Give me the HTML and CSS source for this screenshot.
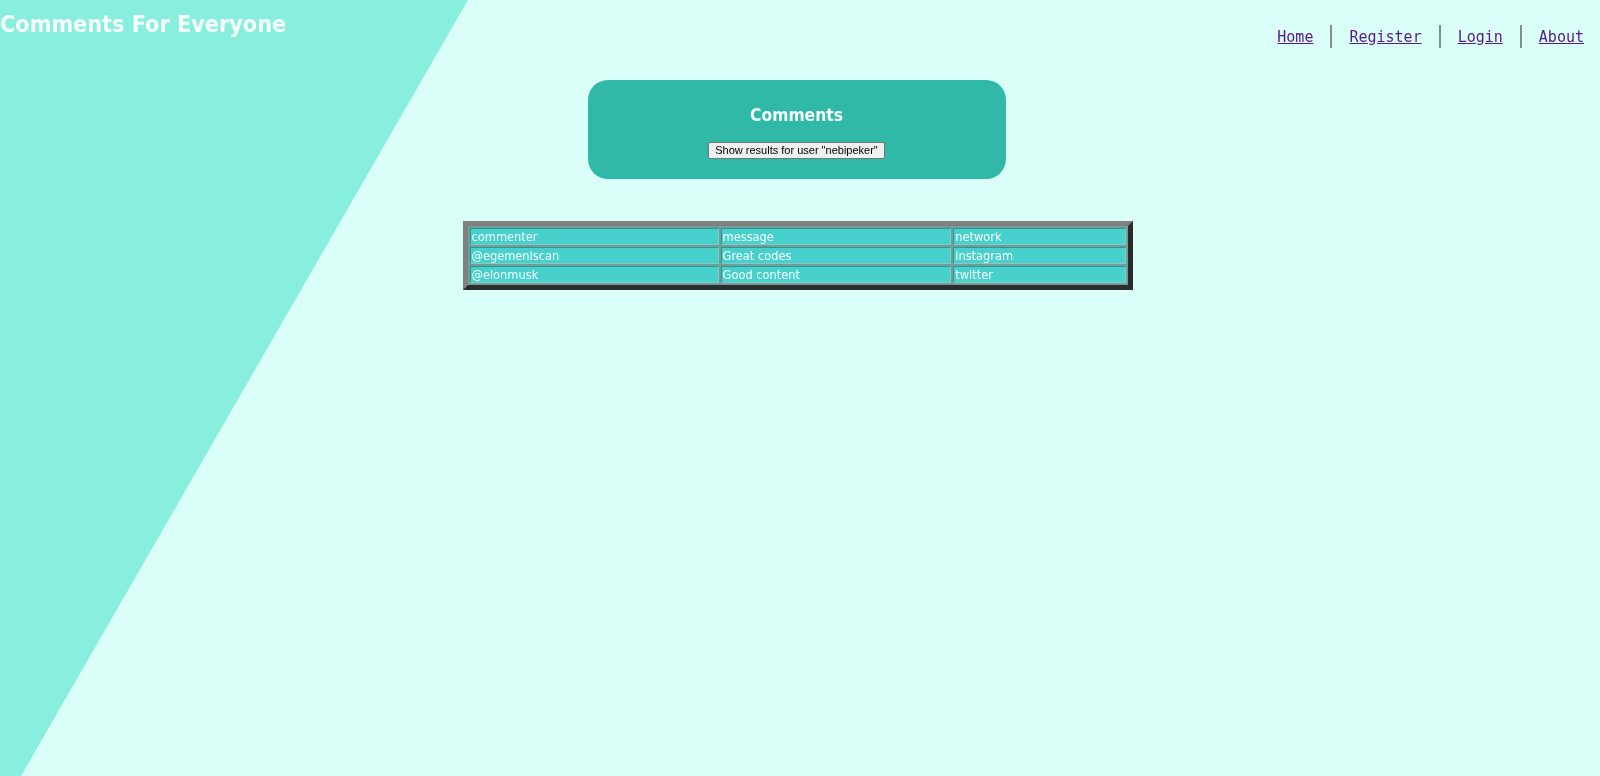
FILE: index.html
```html
<!DOCTYPE html>
<html lang="en">
<head>
<meta charset="utf-8">
<title>Comments For Everyone</title>
<link rel="stylesheet" href="styles.css">
</head>
<body>
<div class="backdrop"></div>
<header class="topbar">
  <h1 class="site-title">Comments For Everyone</h1>
  <nav class="nav">
    <a href="#" class="nav-link">Home</a>
    <span class="nav-sep"></span>
    <a href="#" class="nav-link">Register</a>
    <span class="nav-sep"></span>
    <a href="#" class="nav-link">Login</a>
    <span class="nav-sep"></span>
    <a href="#" class="nav-link">About</a>
  </nav>
</header>
<main class="main">
  <section class="card">
    <h2 class="card-title">Comments</h2>
    <button class="show-btn" type="button">Show results for user "nebipeker"</button>
  </section>
  <table class="results">
    <tr><td class="c1">commenter</td><td class="c2">message</td><td class="c3">network</td></tr>
    <tr><td class="c1">@egemeniscan</td><td class="c2">Great codes</td><td class="c3">instagram</td></tr>
    <tr><td class="c1">@elonmusk</td><td class="c2">Good content</td><td class="c3">twitter</td></tr>
  </table>
</main>
</body>
</html>
```

FILE: styles.css
```css
html, body {
  margin: 0;
  padding: 0;
}
body {
  background: #dafff8;
  font-family: "DejaVu Sans Condensed", "DejaVu Sans", sans-serif;
  min-height: 776px;
  overflow: hidden;
}
.backdrop {
  position: fixed;
  inset: 0;
  z-index: -1;
  background: #88efdf;
  clip-path: polygon(0 0, 468px 0, 21px 776px, 0 776px);
}
.topbar {
  display: flex;
  justify-content: space-between;
  align-items: flex-start;
  height: 80px;
}
.site-title {
  margin: 0;
  padding-top: 8px;
  font-size: 23.2px;
  font-weight: bold;
  color: #f7fffd;
  line-height: 32px;
}
.nav {
  display: flex;
  align-items: center;
  padding-top: 25px;
  padding-right: 16px;
}
.nav-link {
  font-family: "DejaVu Sans Mono", "Liberation Mono", monospace;
  font-size: 15px;
  color: #551a8b;
  text-decoration: underline;
  line-height: 22px;
}
.nav-sep {
  width: 2px;
  height: 23px;
  background: #7f8f8a;
  margin: 0 17px;
}
.main {
  display: flex;
  flex-direction: column;
  align-items: center;
}
.card {
  margin-left: -7px;
  width: 418px;
  height: 99px;
  box-sizing: border-box;
  background: #31b9a7;
  border-radius: 20px;
  display: flex;
  flex-direction: column;
  align-items: center;
  padding-top: 24px;
}
.card-title {
  margin: 0;
  font-size: 17.3px;
  font-weight: bold;
  color: #f5fffd;
  line-height: 22px;
}
.show-btn {
  margin-top: 16px;
  font-family: "Liberation Sans", Arial, sans-serif;
  font-size: 11px;
  padding: 0 6px;
  height: 17px;
  line-height: 15px;
  background: #efefef;
  border: 1px solid #767676;
  border-radius: 2px;
  color: #000;
}
.results {
  margin-top: 42px;
  margin-left: -5px;
  width: 670px;
  border: 5px outset #808080;
  border-spacing: 2px;
  background: #6f9e9b;
  font-size: 12.7px;
  color: #f5fffd;
}
.results td {
  background: #48d1cc;
  border: 1px solid;
  border-color: #2e9590 #86c9c5 #86c9c5 #2e9590;
  padding: 0 1px;
  height: 15px;
  line-height: 15px;
}
.results .c1 { width: 249px; }
.results .c2 { width: 231px; }
.results .c3 { width: 171px; }
```
